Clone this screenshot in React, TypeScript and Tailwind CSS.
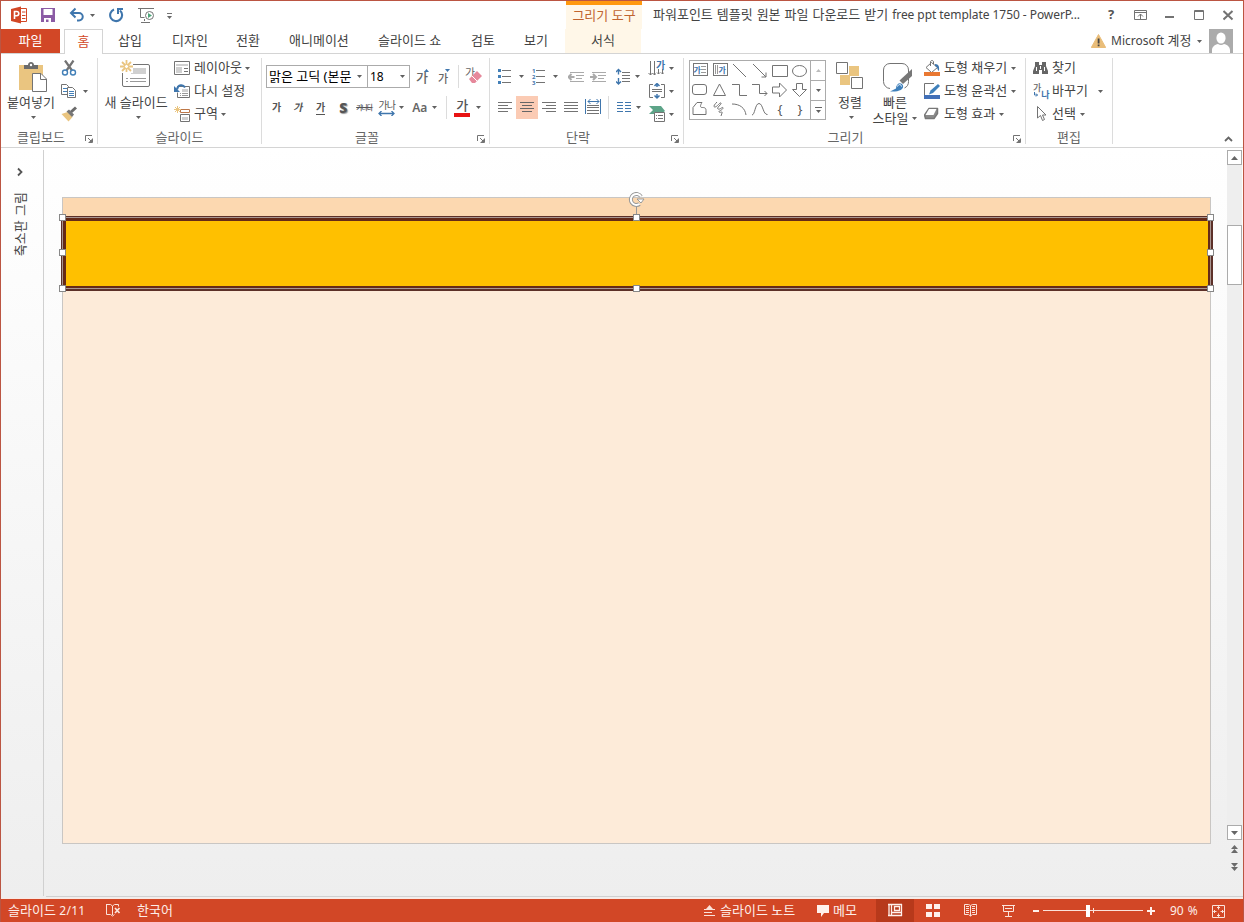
import type { ReactNode } from "react";

type IconProps = {
  // x, y, width, height of the drawing area
  box: [number, number, number, number];
  className?: string;
  stroke?: string;
  children: ReactNode;
};

function Icon({ box, className = "", stroke = "#737373", children }: IconProps) {
  return (
    <svg
      width={box[2]}
      height={box[3]}
      viewBox={box.join(" ")}
      className={`shrink-0 ${className}`}
      fill="none"
      stroke={stroke}
    >
      {children}
    </svg>
  );
}

function Caret({ className = "" }: { className?: string }) {
  return (
    <svg width="5" height="3" className={`shrink-0 ${className}`} fill="#606060">
      <path d="M0 0h5L2.500 3z" />
    </svg>
  );
}

function Group({
  label,
  className,
  labelClass = "",
  launcher = true,
  children,
}: {
  label: string;
  className: string;
  labelClass?: string;
  launcher?: boolean;
  children: ReactNode;
}) {
  return (
    <section className={`flex shrink-0 ${className}`}>
      <div className="flex min-w-0 flex-1 flex-col">
        <div className="flex h-[75px]">{children}</div>
        <div className="flex h-[18px] items-center">
          <span className={`-mt-0.5 flex-1 text-center text-[13px] leading-[18px] text-[#666] ${labelClass}`}>
            {label}
          </span>
          {launcher && (
            <Icon box={[0, 0, 8, 8]} className="mr-[4px] mt-0.5">
              <path d="M.5 6V.5H7M3 3l3 3M7.500 3.500v4h-4" />
              <path d="M7 4v3H4z" fill="#737373" stroke="none" />
            </Icon>
          )}
        </div>
      </div>
      <div className="mt-1 h-[86px] w-px bg-[#dcdcdc]" />
    </section>
  );
}

function CommandRow({ icon, text, caret }: { icon: ReactNode; text: string; caret?: string }) {
  return (
    <div className="flex h-[23px] items-center">
      {icon}
      <span className="-mt-px ml-[3px]">{text}</span>
      {caret && <Caret className={caret} />}
    </div>
  );
}

function TitleBar() {
  return (
    <header className="flex h-7 shrink-0 items-center">
      <Icon box={[10, 6, 18, 18]} className="ml-[9px]" stroke="none">
        <path d="M11 9l10-2.500v17L11 21z" fill="#d24726" />
        <path d="M21 8.500h5.500v13H21" stroke="#d24726" fill="white" />
        <path d="M22 12h3.500M22 15.500h3.500M22 18.500h3.500" stroke="#d24726" />
        <path d="M14.500 19v-7.500h2.200a2 2 0 010 4.200h-2" stroke="white" strokeWidth="1.600" />
      </Icon>
      <Icon box={[40, 7, 16, 17]} className="ml-3" stroke="none">
        <path d="M41 8h14v14H41z" fill="#8b5ba5" />
        <path d="M43.500 9h9v6h-9zM44 18h7v4h-2.500v-2.500H46V22h-2z" fill="white" />
      </Icon>
      <Icon box={[69, 7, 16, 16]} className="ml-[13px]" stroke="#3f76ad">
        <path d="M71 13h8a3.500 3.500 0 010 7.500h-2" strokeWidth="2" />
        <path d="M75.500 8.500L71 13l4.500 4.500" strokeWidth="2" />
      </Icon>
      <Caret className="ml-[5px]" />
      <Icon box={[109, 7, 16, 16]} className="ml-[14px]" stroke="#3f76ad">
        <path d="M114 9.500a6 6 0 106 1" strokeWidth="2.100" />
        <path d="M118 14V9h5" strokeWidth="2" />
      </Icon>
      <Icon box={[138, 7, 18, 17]} className="ml-[13px]">
        <path d="M138 8.500h16M140.500 9v8.500h4M144.500 19v2M141 22.500h9" />
        <circle cx="149.500" cy="15.500" r="4" fill="white" />
        <path d="M148 13v5l4-2.500z" fill="#4ea57a" stroke="none" />
      </Icon>
      <Icon box={[167, 10, 6, 10]} className="ml-[11px]">
        <path d="M167 13.500h5" />
        <path d="M167 16h5l-2.500 3z" fill="#666" stroke="none" />
      </Icon>
      <div className="ml-[393px] flex h-full w-[76px] flex-col items-center border-t-4 border-[#ff980e] bg-[#fff7e8] text-[13px] leading-[20px] text-[#c0642f]">
        그리기 도구
      </div>
      <div className="ml-[11px] w-[451px] text-[13px] text-[#444]">
        <span className="[word-spacing:0.6px]">파워포인트 템플릿 원본 파일 다운로드 받기 </span>
        <span className="text-[12px] tracking-[-0.06px]">free ppt template 1750 - PowerP...</span>
      </div>
      <div className="ml-1 w-2 text-[13px] font-bold text-[#555]">?</div>
      <Icon box={[1134, 9, 14, 12]} className="ml-[18px]">
        <path d="M1134.500 10.500h12v9h-12zM1134 12.500h13M1140.500 19v-5M1138 16.500l2.500-2.500 2.500 2.500" />
      </Icon>
      <Icon box={[1165, 8, 10, 14]} className="ml-[17px]">
        <path d="M1165 17h9" strokeWidth="2" />
      </Icon>
      <Icon box={[1194, 9, 11, 12]} className="ml-[19px]">
        <path d="M1194.500 10.500h9v9h-9zM1194 11.500h10" />
      </Icon>
      <Icon box={[1223, 9, 11, 12]} className="ml-[18px]">
        <path d="M1223.500 11l9 8.500M1232.500 11l-9 8.500" strokeWidth="2" />
      </Icon>
    </header>
  );
}

function TabStrip() {
  return (
    <nav className="flex h-[25px] shrink-0 border-b border-[#d4d4d4] text-[13px] leading-[23px] text-[#444]">
      <div className="w-[59px] bg-[#d24726] text-center text-white">파일</div>
      <div className="-mb-px ml-1 w-[39px] border border-b-0 border-[#d4d4d4] bg-white text-center leading-[22px] text-[#d24726]">
        홈
      </div>
      <span className="ml-[15px] w-[54px]">삽입</span>
      <span className="w-[64px]">디자인</span>
      <span className="w-[53px]">전환</span>
      <span className="w-[89px]">애니메이션</span>
      <span className="w-[93px]">슬라이드 쇼</span>
      <span className="w-[53px]">검토</span>
      <span className="w-[41px]">보기</span>
      <span className="w-[76px] bg-[#fff7e8] text-center">서식</span>
      <Icon box={[1091, 33, 15, 15]} className="ml-[450px] mt-1" stroke="none">
        <path d="M1098.500 34.500l7.200 13h-14.400z" fill="#e9bd79" stroke="#e9bd79" />
        <path d="M1097.700 38.500h1.800v5h-1.800zM1097.700 44.500h1.800v1.800h-1.800z" fill="#444" />
      </Icon>
      <span className="ml-[5px] w-[81px]">
        <span className="text-[12px]">Microsoft</span> 계정
      </span>
      <Caret className="ml-[5px] mt-[11px]" />
      <svg width="24" height="24" className="ml-[7px] shrink-0 bg-[#ababab]" fill="white">
        <ellipse cx="12" cy="9" rx="4.600" ry="5.500" />
        <path d="M3 24v-3c0-3 3-5.500 6-6 2 1.300 4 1.300 6 0 3 .5 6 3 6 6v3z" />
      </svg>
    </nav>
  );
}

function ClipboardGroup() {
  return (
    <Group label="클립보드" className="w-[97px]" labelClass="pr-[4px]">
      <div className="flex w-[60px] flex-col items-center">
        <Icon box={[18, 60, 30, 32]} className="mt-1.5 ml-[4px]">
          <path d="M19 65h24v25H19z" fill="#eac580" stroke="none" />
          <path d="M24 69v-4h4c0-4 6-4 6 0h4v4z" fill="#6b6b6b" stroke="none" />
          <circle cx="31" cy="65" r="1.200" fill="white" stroke="none" />
          <path d="M32.500 73.500h8.500l5.500 5.500v12.500h-14z" fill="white" />
          <path d="M40.500 74v5.500h6" />
        </Icon>
        <span className="leading-5">붙여넣기</span>
        <Caret className="ml-[5px] mt-1" />
      </div>
      <div className="flex flex-col pt-[3px]">
        <div className="flex h-[23px] items-center">
          <Icon box={[61, 60, 17, 17]}>
            <path d="M65 60.500l7 10M73.500 60.500l-7 10" strokeWidth="2.200" />
            <circle cx="65" cy="72.500" r="2.500" stroke="#4380b8" strokeWidth="1.400" />
            <circle cx="73" cy="72.500" r="2.500" stroke="#4380b8" strokeWidth="1.400" />
          </Icon>
        </div>
        <div className="flex h-[23px] items-center">
          <Icon box={[61, 83, 17, 17]}>
            <path d="M61.500 84.500h5l2 2v8h-7z" fill="white" />
            <path d="M63 88.500h4M63 91.500h4" stroke="#4380b8" />
            <path d="M67.500 87.500h5l3 3v7h-8z" fill="white" />
            <path d="M69 91.500h5M69 93.500h5M69 95.500h5" stroke="#4380b8" />
          </Icon>
          <Caret className="ml-[5px]" />
        </div>
        <div className="flex h-[23px] items-center">
          <Icon box={[61, 106, 17, 17]} stroke="none">
            <path d="M61.500 114l6-2 5 5-4 4.500z" fill="#eac580" />
            <path d="M66.500 111.500l2.500-2 5 5-2 2.500z" fill="#777" />
            <path d="M71 112l5-4.500" stroke="#6b6b6b" strokeWidth="3" />
          </Icon>
        </div>
      </div>
    </Group>
  );
}

function SlidesGroup() {
  return (
    <Group label="슬라이드" className="w-[164px]" launcher={false}>
      <div className="flex w-[76px] flex-col items-center">
        <Icon box={[119, 60, 32, 32]} className="-ml-0.5 mt-1.5">
          <rect x="122.500" y="64.500" width="27" height="22" rx="1.500" fill="white" />
          <path d="M131 68h15v6h-15z" fill="#d0d0d0" stroke="none" />
          <path d="M126 78.500h2m2 0h16M126 81.500h2m2 0h16" stroke="#999" />
          <path d="M119 59h14v14h-14z" fill="white" stroke="none" />
          <path
            d="M126.500 60v12M120 66.500h13M122 62l9 9M131 62l-9 9"
            stroke="#eac580"
            strokeWidth="1.800"
          />
          <circle cx="126.500" cy="66.500" r="2" fill="white" stroke="#eac580" />
        </Icon>
        <span className="leading-5">새 슬라이드</span>
        <Caret className="ml-[5px] mt-1" />
      </div>
      <div className="flex flex-col pt-[3px]">
        <CommandRow
          icon={
            <Icon box={[174, 60, 17, 17]}>
              <path d="M174.500 61.500h15v13h-15z" />
              <path d="M176 64h12v2h-12zM176 67h6v6h-6z" fill="#d0d0d0" stroke="none" />
              <path d="M184 68.500h4M184 71.500h4" />
            </Icon>
          }
          text="레이아웃"
          caret="ml-[3px]"
        />
        <CommandRow
          icon={
            <Icon box={[174, 83, 17, 17]}>
              <path d="M177 86.500h12.500v11h-12v-5" />
              <path d="M182 89h6v3h-6z" fill="#d0d0d0" stroke="none" />
              <path d="M180 93.500h1m1 0h6M180 95.500h1m1 0h6" stroke="#999" />
              <path d="M185 87.500c-2-3.500-7-3-8 2" stroke="#3f76ad" strokeWidth="2" />
              <path d="M174 86v6h6z" fill="#3f76ad" stroke="none" />
            </Icon>
          }
          text="다시 설정"
        />
        <CommandRow
          icon={
            <Icon box={[174, 106, 17, 17]}>
              <path d="M180.500 109.500h9v3h-9z" stroke="#bd7748" />
              <path d="M180.500 114.500h9v7h-9z" />
              <path d="M182 117h6v3h-6z" fill="#d0d0d0" stroke="none" />
              <path d="M177.500 106v7M174 109.500h7M175 107l5 5M180 107l-5 5" stroke="#eac580" />
            </Icon>
          }
          text="구역"
          caret="ml-[3px]"
        />
      </div>
    </Group>
  );
}

function FontGroup() {
  return (
    <Group label="글꼴" className="w-[228px]" labelClass="pr-[5px]">
      <div className="flex flex-col pt-[11px]">
        <div className="flex h-[23px] items-center">
          <div className="ml-1 flex h-[23px] w-[102px] items-center border border-[#ababab] pl-[2px] text-black">
            <span className="w-[86px] whitespace-nowrap">맑은 고딕 (본문</span>
            <Caret className="ml-[2px]" />
          </div>
          <div className="-ml-px flex h-[23px] w-[43px] items-center border border-[#ababab] pl-[2px] text-black">
            <span className="w-[30px] text-[12px]">18</span>
            <Caret />
          </div>
          <span className="ml-[6px] mt-[3px] text-[13px] font-medium text-[#666]">가</span>
          <svg width="5" height="3" className="-ml-1 -mt-[12px]" fill="#3f76ad">
            <path d="M0 3h5L2.500 0z" />
          </svg>
          <span className="ml-[9px] mt-[5px] text-[11px] font-medium text-[#666]">가</span>
          <svg width="5" height="3" className="-ml-[3px] -mt-[12px]" fill="#3f76ad">
            <path d="M0 0h5L2.500 3z" />
          </svg>
          <div className="ml-[8px] h-[23px] w-px bg-[#dcdcdc]" />
          <span className="ml-[6px] -mt-[7px] text-[11px] text-[#666]">가</span>
          <Icon box={[469, 68, 15, 17]} className="-ml-[6px]" stroke="none">
            <path d="M469 79l8-8 5 5-7 7h-3z" fill="#e6889b" />
            <path d="M472 76l5 5" stroke="white" />
          </Icon>
        </div>
        <div className="mt-2 flex h-[23px] items-center text-[10px] text-[#555]">
          <span className="ml-[10px] w-[22px] font-bold">가</span>
          <span className="w-[22px] -skew-x-12 font-bold">가</span>
          <span className="mr-[14px] mt-px h-[14px] border-b border-[#555] font-bold leading-[12px]">가</span>
          <span className="w-[17px] text-[14px] font-black [text-shadow:1px_1px_1px_#999]">S</span>
          <span className="w-[22px] text-[7px] font-medium leading-3 tracking-[-1.2px] line-through">가나다</span>
          <div className="flex w-[17px] flex-col items-center">
            <span className="text-[10px] leading-[11px] tracking-[-1px]">가나</span>
            <Icon box={[0, 0, 17, 5]} stroke="#3f76ad">
              <path d="M1 2.500h15M3.500 0L1 2.500 3.500 5M13.500 0L16 2.500 13.500 5" strokeWidth="1.300" />
            </Icon>
          </div>
          <Caret className="ml-[4px]" />
          <span className="ml-2 w-[17px] text-[12px] font-semibold text-[#666]">Aa</span>
          <Caret className="ml-[3px]" />
          <div className="ml-[9px] h-[23px] w-px bg-[#dcdcdc]" />
          <div className="ml-[7px] h-[19px] w-4 border-b-4 border-[#e81313] text-center text-[13px] font-medium leading-[14px]">
            가
          </div>
          <Caret className="ml-[6px]" />
        </div>
      </div>
    </Group>
  );
}

function ParagraphGroup() {
  return (
    <Group label="단락" className="w-[194px]" labelClass="pr-[5px]">
      <div className="flex w-[158px] flex-col pt-[11px]">
        <div className="flex h-[23px] items-center">
          <Icon box={[497, 67, 15, 17]} className="ml-[7px]">
            <path d="M502 69.500h9M502 75.500h9M502 81.500h9" />
            <path d="M498 68h3v3h-3zM498 74h3v3h-3zM498 80h3v3h-3z" fill="#4380b8" stroke="none" />
          </Icon>
          <Caret className="ml-[7px]" />
          <div className="ml-[8px] flex flex-col text-[6px] font-bold leading-[6px] text-[#3f76ad]">
            <span>1</span>
            <span>2</span>
            <span>3</span>
          </div>
          <Icon box={[536, 67, 11, 17]}>
            <path d="M537 69.500h9M537 75.500h9M537 81.500h9" />
          </Icon>
          <Caret className="ml-[7px]" />
          <Icon box={[568, 67, 17, 17]} className="ml-[10px]" stroke="#aaa">
            <path d="M570 71.500h14M576 74.500h8M576 77.500h6M570 80.500h14" />
            <path d="M568.500 76h6M571.500 73l-3 3 3 3" strokeWidth="2" />
          </Icon>
          <Icon box={[590, 67, 17, 17]} className="ml-[5px]" stroke="#aaa">
            <path d="M592 71.500h14M598 74.500h8M598 77.500h6M592 80.500h14" />
            <path d="M590 76h6M593 73l3 3-3 3" strokeWidth="2" />
          </Icon>
          <Icon box={[616, 67, 15, 17]} className="ml-[9px]">
            <path d="M622 71.500h8M622 74.500h8M622 77.500h8M622 80.500h8" />
            <path
              d="M618.500 68.500v5M616 71l2.500-2.500L621 71M618.500 77v5.500M616 80.500l2.500 2.500 2.500-2.500"
              stroke="#3f76ad"
              strokeWidth="1.400"
            />
          </Icon>
          <Caret className="ml-[4px]" />
        </div>
        <div className="mt-2 flex h-[23px] items-center">
          <Icon box={[497, 98, 17, 19]} className="ml-[7px]">
            <path d="M498 102.500h14M498 105.500h10M498 108.500h14M498 111.500h10" />
          </Icon>
          <div className="ml-[2px] flex h-[23px] w-[22px] items-center justify-center bg-[#fbcbb4]">
            <Icon box={[519, 98, 16, 19]}>
              <path d="M520 102.500h14M522 105.500h10M520 108.500h14M522 111.500h10" stroke="#666" />
            </Icon>
          </div>
          <Icon box={[541, 98, 17, 19]} className="ml-[3px]">
            <path d="M542 102.500h14M546 105.500h10M542 108.500h14M546 111.500h10" />
          </Icon>
          <Icon box={[563, 98, 17, 19]} className="ml-[5px]">
            <path d="M564 102.500h14M564 105.500h14M564 108.500h14M564 111.500h14" />
          </Icon>
          <Icon box={[585, 98, 17, 19]} className="ml-[5px]">
            <path d="M587 105.500h12M587 107.500h12M587 110.500h12M587 113.500h12" />
            <path
              d="M585.500 99v15M600.500 99v15M588 101.500h11M590.500 99l-2.500 2.500 2.500 2.500M596.500 99l2.500 2.500-2.500 2.500"
              stroke="#3f76ad"
            />
          </Icon>
          <div className="ml-[6px] h-[23px] w-px bg-[#dcdcdc]" />
          <Icon box={[616, 98, 15, 19]} className="ml-[7px]" stroke="#3f76ad">
            <path d="M617 102.500h6m2 0h6M617 105.500h6m2 0h6M617 108.500h6m2 0h6M617 111.500h6m2 0h6" />
          </Icon>
          <Caret className="ml-[5px]" />
        </div>
      </div>
      <div className="flex flex-col pt-[3px]">
        <div className="flex h-[23px] items-center">
          <Icon box={[648, 60, 8, 17]}>
            <path d="M650.500 61v14M654.500 61v14M648.500 73l2 2 2-2M652.500 73l2 2 2-2" />
          </Icon>
          <div className="flex h-[17px] w-[10px] flex-col text-[10px] font-bold leading-[10px] text-[#3f76ad]">
            가
            <Icon box={[656, 70, 8, 6]} className="-mt-px">
              <path d="M658.500 70v5M662.500 70v5M657 73.500l1.500 1.500 1.500-1.500M661 73.500l1.500 1.500 1.500-1.500" />
            </Icon>
          </div>
          <Caret className="ml-[3px]" />
        </div>
        <div className="flex h-[23px] items-center">
          <Icon box={[648, 83, 18, 17]}>
            <path d="M653 84.500h-3.500v13h3.500M661 84.500h3.500v13H661M652 89.500h10M652 91.500h10" />
            <path
              d="M657 83v4M654.500 86l2.500-2.500 2.500 2.500M657 94v4M654.500 95.500l2.500 2.500 2.500-2.500"
              stroke="#3f76ad"
              strokeWidth="1.500"
            />
          </Icon>
          <Caret className="ml-[3px]" />
        </div>
        <div className="flex h-[23px] items-center">
          <Icon box={[648, 106, 18, 17]}>
            <path d="M649 106h12l4 5-4 3h-12l4-4z" fill="#5da488" stroke="none" />
            <path d="M654.500 112.500h10v9h-10z" fill="white" />
            <path d="M656 115.500h1m1 0h5M656 118.500h1m1 0h5" />
          </Icon>
          <Caret className="ml-[3px]" />
        </div>
      </div>
    </Group>
  );
}

const shapes: string[] = [
  "M2 2l13 13",
  "M2 2l13 13M15 10.500V15h-4.500",
  "M1.500 3.500h15v11h-15z",
  "M1.500 9a7 5.500 0 0114 0 7 5.500 0 01-14 0z",
  "M4 3.500h9a2.500 2.500 0 012.500 2.500v5a2.500 2.500 0 01-2.500 2.500H4A2.500 2.500 0 011.500 11V6A2.500 2.500 0 014 3.500z",
  "M8.500 3l6 11.500h-12z",
  "M1 3.500h7.500v11H16",
  "M1 3.500h7.500v9H16M13.500 10l2.500 2.500-2.500 2.500",
  "M1.500 6h7V2l7 7-7 7v-4h-7z",
  "M5.500 2.500h6v6h4L8.500 15.500l-7-7h4z",
  "M2 14.500v-7l4-5h5c-2 3-2 5 0 5s4 0 4 3v4z",
  "M6 2c-3 3-4 5-2 5s5-5 6-4-5 5-3 6 5-3 5-1-5 3-4 4 4-1 3 1l-1 3",
  "M1 4c8 0 13 4 14 11",
  "M1 15C4 15 4 3.500 8 3.500S12 15 16.500 14.500",
];

function ShapeGallery() {
  return (
    <div className="ml-[5px] mt-1.5 flex h-[60px] w-[137px] shrink-0 border border-[#ababab]">
      <div className="grid flex-1 grid-cols-6 grid-rows-3 place-items-center">
        <div className="-mt-0.5 flex h-[13px] w-[15px] items-center border border-[#777] text-[8px] font-bold leading-3 text-[#3f76ad]">
          가
          <svg width="5" height="9" stroke="#999">
            <path d="M0 1.500h5M0 4.500h5M0 7.500h5" />
          </svg>
        </div>
        <div className="-mt-0.5 flex h-[13px] w-[15px] items-center border border-[#777] text-[8px] font-bold leading-3 text-[#3f76ad]">
          <svg width="5" height="9" stroke="#999">
            <path d="M1.500 0v9M3.500 0v9" />
          </svg>
          가
        </div>
        {shapes.map((d) => (
          <Icon key={d} box={[0, 0, 18, 18]}>
            <path d={d} />
          </Icon>
        ))}
        <span className="text-[13px] leading-4 text-[#555]">{"{"}</span>
        <span className="text-[13px] leading-4 text-[#555]">{"}"}</span>
      </div>
      <div className="flex w-[15px] flex-col border-l border-[#ababab]">
        <div className="flex h-5 items-center justify-center border-b border-[#ababab]">
          <svg width="5" height="3" fill="#bbb">
            <path d="M0 3h5L2.500 0z" />
          </svg>
        </div>
        <div className="flex h-5 items-center justify-center border-b border-[#ababab]">
          <Caret />
        </div>
        <div className="flex flex-1 flex-col items-center justify-center gap-[2px]">
          <div className="h-px w-[7px] bg-[#666]" />
          <Caret />
        </div>
      </div>
    </div>
  );
}

function DrawingGroup() {
  return (
    <Group label="그리기" className="w-[342px]" labelClass="pr-[6px]">
      <ShapeGallery />
      <div className="ml-[5px] flex w-[38px] flex-col items-center">
        <Icon box={[834, 60, 32, 32]} className="mt-1.5">
          <path d="M849 66h10v10h-10zM840 75h10v10h-10z" fill="#eac580" stroke="none" />
          <path d="M836.500 62.500h11v11h-11zM851.500 77.500h11v11h-11z" fill="white" />
        </Icon>
        <span className="leading-5">정렬</span>
        <Caret className="ml-[2px] mt-1" />
      </div>
      <div className="ml-px flex w-[50px] flex-col items-center">
        <Icon box={[881, 60, 32, 32]} className="mt-1.5 ml-[3px]">
          <path d="M890 88.500a7 7 0 01-6.500-7V70a6.500 6.500 0 016.500-6.500h12a6.500 6.500 0 016.500 6.500v11.500a7 7 0 01-4 6.500" />
          <path d="M912 69v7l-9 8-3.500-3.500z" fill="#777" stroke="none" />
          <path d="M890 91.500l6-3c0-5 5-7 7-3 1 4-4 6.500-13 6z" fill="#3f80bb" stroke="none" />
          <path d="M897.500 86.500c1-3 4-2 4 0" stroke="white" />
        </Icon>
        <span className="mt-[2px] leading-4">빠른</span>
        <div className="flex items-center leading-4">
          스타일
          <Caret className="ml-1" />
        </div>
      </div>
      <div className="ml-[4px] flex flex-col pt-[3px]">
        <CommandRow
          icon={
            <Icon box={[924, 60, 17, 17]}>
              <path d="M926 67.500l5.500-5 6 5-6 5z" fill="white" />
              <path d="M930.500 66v-4c0-2 3-2 3 0v2" />
              <path d="M935 64c4 0 4.500 3 4 7-2-1-1-4-4-5z" fill="#3f76ad" stroke="none" />
              <path d="M924 72h16v4h-16z" fill="#e97832" stroke="none" />
            </Icon>
          }
          text="도형 채우기"
          caret="ml-1"
        />
        <CommandRow
          icon={
            <Icon box={[924, 83, 17, 17]}>
              <path d="M934 83.500h-9.500V95" />
              <path d="M938 84l2 2-7 7-4 1.500 1.500-4z" fill="#3f80bb" stroke="none" />
              <path d="M924 95h16v4h-16z" fill="#4270b8" stroke="none" />
            </Icon>
          }
          text="도형 윤곽선"
          caret="ml-1"
        />
        <CommandRow
          icon={
            <Icon box={[924, 106, 17, 17]}>
              <path d="M929 108.500h8.500v5l-3.500 5h-8.500l-1-3.500z" fill="#8a8a8a" stroke="#777" strokeLinejoin="round" strokeWidth="1.500" />
              <path d="M929 109h7.500l-3 6h-8z" fill="white" stroke="none" />
            </Icon>
          }
          text="도형 효과"
          caret="ml-1"
        />
      </div>
    </Group>
  );
}

function EditingGroup() {
  return (
    <Group label="편집" className="w-[87px]" launcher={false}>
      <div className="ml-[7px] flex flex-col pt-[3px]">
        <CommandRow
          icon={
            <Icon box={[1033, 60, 16, 17]} stroke="none">
              <path d="M1035 62h4v3h3v-3h4v4l2 5v3h-6v-4h-3v4h-6v-3l2-5z" fill="#666" />
              <path d="M1036.500 67v4M1044.500 67v4M1040.500 66v3" stroke="white" />
            </Icon>
          }
          text="찾기"
        />
        <CommandRow
          icon={
            <div className="flex h-[17px] w-4 text-[9px] font-medium leading-[9px] text-[#666]">
              <div className="flex flex-col">
                가
                <Icon box={[0, 0, 5, 5]} stroke="#3f76ad">
                  <path d="M1.500 0v3h3M3 1.500L4.500 3 3 4.500" />
                </Icon>
              </div>
              <span className="mt-[7px] font-bold text-[#3f76ad]">나</span>
            </div>
          }
          text="바꾸기"
          caret="ml-[10px]"
        />
        <CommandRow
          icon={
            <Icon box={[1033, 106, 16, 17]}>
              <path d="M1037.500 106.500v11.500l3-2.500 2 5 2-1-2-4.500h3.500z" fill="white" />
            </Icon>
          }
          text="선택"
          caret="ml-1"
        />
      </div>
    </Group>
  );
}

function Ribbon() {
  return (
    <div className="flex h-[94px] shrink-0 whitespace-nowrap border-b border-[#d4d4d4] text-[13px] text-[#444]">
      <ClipboardGroup />
      <SlidesGroup />
      <FontGroup />
      <ParagraphGroup />
      <DrawingGroup />
      <EditingGroup />
      <Icon box={[0, 0, 9, 6]} className="mb-[5px] ml-auto mr-[10px] self-end" stroke="#666">
        <path d="M1 5l3.500-3.500L8 5" strokeWidth="1.800" />
      </Icon>
    </div>
  );
}

const handles = [
  "left-[-2px] top-[-2px]",
  "left-[572px] top-[-2px]",
  "right-[-1px] top-[-2px]",
  "left-[-2px] top-[33px]",
  "right-[-1px] top-[33px]",
  "left-[-2px] bottom-[-1px]",
  "left-[572px] bottom-[-1px]",
  "right-[-1px] bottom-[-1px]",
];

function Slide() {
  return (
    <div className="ml-[17px] mt-[49px] h-[647px] w-[1152px]">
      <div className="ml-px h-[647px] w-[1149px] border border-[#c9c6c3] bg-[#fdebd9]">
        <div className="h-[18px] bg-[#fcd8b0]" />
        {/* selected rectangle, slightly wider than the slide */}
        <div className="relative -ml-[2px] h-[75px] w-[1152px] bg-[#5c3028] p-px">
          <div className="h-[72px] w-[1149px] border border-[#a89590] bg-[#652a17] pb-[2px] pl-[3px] pr-[2px] pt-[3px]">
            <div className="h-full bg-[#ffc000]" />
          </div>
          <div className="absolute left-[575px] top-[-10px] h-3 w-px bg-[#999]" />
          <svg width="18" height="16" className="absolute left-[567px] top-[-24px]" fill="none">
            <path d="M13 4.500A5.500 5.500 0 1011.500 12" stroke="#999" strokeWidth="4" />
            <path d="M9 7h7l-3 4z" fill="white" stroke="#999" />
            <path d="M13 4.500A5.500 5.500 0 1011.500 12" stroke="white" strokeWidth="2" />
          </svg>
          {handles.map((position) => (
            <div key={position} className={`absolute size-[7px] border border-[#888] bg-white ${position}`} />
          ))}
        </div>
      </div>
    </div>
  );
}

function ScrollBar() {
  return (
    <div className="ml-auto flex w-4 flex-col pt-[2px]">
      <div className="flex h-[15px] w-[15px] items-center justify-center border border-[#ababab] bg-white">
        <svg width="7" height="4" fill="#666">
          <path d="M0 4h7L3.500 0z" />
        </svg>
      </div>
      <div className="h-[660px] w-[15px] bg-[#eee] pt-[60px]">
        <div className="h-[60px] border border-[#ababab] bg-white" />
      </div>
      <div className="flex h-[15px] w-[15px] items-center justify-center border border-[#ababab] bg-white">
        <svg width="7" height="4" fill="#666">
          <path d="M0 0h7L3.500 4z" />
        </svg>
      </div>
      <svg width="15" height="36" fill="#6a6a6a">
        <path d="M4 9l3.500-4L11 9zM4 13l3.500-4 3.500 4zM4 23h7l-3.500 4zM4 27h7l-3.500 4z" />
      </svg>
    </div>
  );
}

function Workspace() {
  return (
    <main className="flex h-[751px] shrink-0 flex-col bg-linear-to-b from-white to-[#eee]">
      <div className="flex h-[748px]">
        <aside className="mt-[2px] flex w-[43px] flex-col items-center border-r border-[#d0d0d0] pr-1">
          <Icon box={[0, 0, 6, 10]} className="mt-[17px]" stroke="#555">
            <path d="M1 1.500L4.500 5 1 8.500" strokeWidth="1.800" />
          </Icon>
          <span className="mt-[15px] rotate-180 whitespace-nowrap text-[13px] leading-[18px] text-[#444] [text-orientation:sideways] [word-spacing:1px] [writing-mode:vertical-rl]">
            축소판 그림
          </span>
        </aside>
        <Slide />
        <ScrollBar />
      </div>
      <div className="ml-[45px] h-px bg-[#d0d0d0]" />
      <div className="mt-px h-px bg-[#fbe9e4]" />
    </main>
  );
}

function StatusBar() {
  return (
    <footer className="-mx-px flex h-[23px] shrink-0 items-center bg-[#d24726] text-[13px] text-[#fdeee9]">
      <span className="ml-2 w-[98px]">
        슬라이드 <span className="text-[12px] tracking-[0.3px]">2/11</span>
      </span>
      <Icon box={[106, 902, 16, 15]} stroke="#fbe3db">
        <path d="M106.500 903.500h4l2 1.500 2-1.500h4v2M112.500 905v9M106.500 903v10.500h4l2 1.500 2-1.500" />
        <path d="M115 907l4.500 5M119.500 907l-4.500 5" strokeWidth="1.700" />
      </Icon>
      <span className="ml-[15px] w-[566px]">한국어</span>
      <Icon box={[703, 903, 13, 14]} stroke="#fbe3db">
        <path d="M704 908.500h11M704 911.500h8M704 914.500h11" />
        <path d="M706 908l3.500-4 3.500 4z" fill="#fbe3db" stroke="none" />
      </Icon>
      <span className="ml-1 w-[97px]">슬라이드 노트</span>
      <Icon box={[817, 903, 13, 14]} stroke="none">
        <path d="M817 904h12v8h-5l-3 4v-4h-4z" fill="#fff1ec" />
      </Icon>
      <span className="ml-[3px] w-[43px]">메모</span>
      <div className="flex h-full w-[38px] items-center justify-center bg-[#b7391b]">
        <Icon box={[887, 902, 16, 16]} stroke="#fff1ec">
          <path d="M888 903.500h14M888 914.500h14M889 903v12M901.500 903v12M891.500 903v12M892 911.500h9" strokeWidth="1.300" />
          <path d="M894.500 905.500h5v4h-5z" strokeWidth="1.300" />
        </Icon>
      </div>
      <Icon box={[926, 902, 14, 16]} className="ml-3" stroke="none">
        <path d="M926 903h6v5h-6zM934 903h6v5h-6zM926 911h6v5h-6zM934 911h6v5h-6z" fill="#fff1ec" />
      </Icon>
      <Icon box={[963, 902, 15, 16]} className="ml-[23px]" stroke="#fbe3db">
        <path d="M964.500 903.500h4l2 1 2-1h4v10h-4l-2 1.500-2-1.500h-4zM970.500 905v10M966 905.500h3M966 907.500h3M966 909.500h3M966 911.500h3M972 905.500h3M972 907.500h3M972 909.500h3M972 911.500h3" />
      </Icon>
      <Icon box={[1002, 902, 14, 16]} className="ml-6" stroke="#fbe3db">
        <path d="M1002 904.500h13M1003.500 905v5.500h10V905M1008.500 911v4M1005 915.500h7M1005 907.500h7" />
      </Icon>
      <div className="ml-[17px] h-[2px] w-[6px] bg-[#fff1ec]" />
      <Icon box={[1043, 902, 101, 16]} className="ml-1" stroke="#fbe3db">
        <path d="M1043 909.500h100M1093.500 907v5" />
        <path d="M1086 904h4v12h-4z" fill="white" stroke="none" />
      </Icon>
      <Icon box={[1147, 905, 8, 10]} className="ml-[3px]" stroke="#fff1ec">
        <path d="M1147 910h8M1151 906v8" strokeWidth="2" />
      </Icon>
      <span className="ml-[15px] w-[42px] text-[12px] [word-spacing:1px]">90 %</span>
      <Icon box={[1212, 903, 14, 14]} stroke="#fbe3db">
        <path d="M1212.500 904.500h12v12h-12zM1218.500 905.500v3M1218.500 912.500v3M1213.500 910.500h3M1220.500 910.500h3" />
        <path d="M1217 907l1.500-1.500 1.500 1.500M1217 914l1.500 1.500 1.500-1.500M1215 909l-1.500 1.500 1.500 1.500M1222 909l1.500 1.500-1.500 1.500" />
      </Icon>
    </footer>
  );
}

export default function App() {
  return (
    <div className="flex h-[922px] w-[1244px] flex-col overflow-hidden border border-b-0 border-[#bb5542] bg-white font-['Noto_Sans','Noto_Sans_CJK_KR',sans-serif] whitespace-nowrap">
      <TitleBar />
      <TabStrip />
      <Ribbon />
      <Workspace />
      <StatusBar />
    </div>
  );
}
